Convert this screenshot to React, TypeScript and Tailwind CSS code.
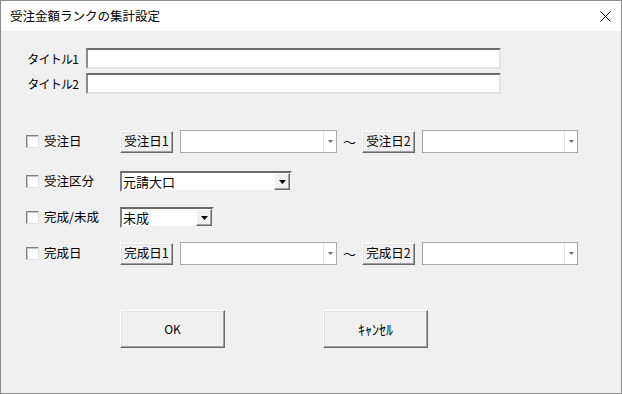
import React from 'react';

const font = { fontFamily: '"Noto Sans CJK JP", "Noto Sans", sans-serif' };

const CheckBox: React.FC = () => (
  <span className="block shrink-0 w-[13px] h-[13px] bg-white border border-t-[#808080] border-l-[#808080] border-b-[#e3e3e3] border-r-[#e3e3e3] shadow-[inset_1px_1px_0_#c8c8c8]" />
);

const RaisedButton: React.FC<{ label: string; w: string }> = ({ label, w }) => (
  <button
    className={`${w} h-[22px] shrink-0 bg-[#f0f0f0] text-[12.5px] leading-none text-black border border-t-white border-l-white border-b-[#696969] border-r-[#696969] shadow-[inset_-1px_-1px_0_#a0a0a0,inset_1px_1px_0_#e3e3e3]`}
  >
    {label}
  </button>
);

const DateCombo: React.FC<{ w: string }> = ({ w }) => (
  <div className={`${w} h-[23px] shrink-0 flex bg-white border border-[#a9a9a9]`}>
    <div className="flex-1" />
    <div className="w-[13px] border-l border-[#e3e3e3] flex items-center justify-center">
      <svg width="5" height="3" viewBox="0 0 5 3">
        <path d="M0 0h5L2.5 3z" fill="#6d6d6d" />
      </svg>
    </div>
  </div>
);

const OldSelect: React.FC<{ value: string; w: string }> = ({ value, w }) => (
  <div className={`${w} h-[21px] shrink-0 flex bg-white border-2 border-t-[#696969] border-l-[#808080] border-b-[#f0f0f0] border-r-[#f0f0f0]`}>
    <div className="flex-1 pl-[1px] text-[13px] leading-[17px] text-black">{value}</div>
    <div className="w-[16px] h-[17px] bg-[#f0f0f0] border border-t-white border-l-white border-b-[#696969] border-r-[#696969] shadow-[inset_-1px_-1px_0_#a0a0a0] flex items-center justify-center">
      <svg width="7" height="4" viewBox="0 0 7 4">
        <path d="M0 0h7L3.5 4z" fill="#000" />
      </svg>
    </div>
  </div>
);

const SunkenInput: React.FC = () => (
  <div className="w-[415px] h-[21px] bg-white border-2 border-t-[#6d6d6d] border-l-[#8a8a8a] border-b-[#e3e3e3] border-r-[#e3e3e3]" />
);

const CheckLabel: React.FC<{ label: string }> = ({ label }) => (
  <div className="w-[119px] shrink-0 flex items-center gap-[5px] pl-[25px]">
    <CheckBox />
    <span className="text-[12.5px] text-black whitespace-nowrap">{label}</span>
  </div>
);

const Tilde: React.FC = () => (
  <span className="w-[25px] shrink-0 text-center text-[13px] text-black">～</span>
);

const bigButton =
  'w-[105px] h-[38px] bg-[#f0f0f0] text-black border border-t-white border-l-white border-b-[#696969] border-r-[#696969] shadow-[inset_-1px_-1px_0_#a0a0a0,inset_1px_1px_0_#e3e3e3]';

export default function App() {
  return (
    <div style={font} className="w-[622px] h-[394px] flex flex-col border border-[#8c8c8c] bg-[#f0f0f0]">
      <div className="h-[30px] shrink-0 bg-white flex items-center justify-between pl-[9px] pr-[10px]">
        <span className="text-[12.5px] text-black">受注金額ランクの集計設定</span>
        <svg width="11" height="11" viewBox="0 0 11 11">
          <path d="M0.5 0.5l10 10M10.5 0.5l-10 10" stroke="#000" strokeWidth="1" />
        </svg>
      </div>

      <div className="flex-1 flex flex-col pt-[17px]">
        <div className="flex flex-col gap-[4px]">
          {['タイトル1', 'タイトル2'].map((t) => (
            <div key={t} className="flex items-center">
              <span className="w-[77px] text-right text-[12px] tracking-[-0.8px] text-black">{t}</span>
              <div className="w-[8px]" />
              <SunkenInput />
            </div>
          ))}
        </div>

        <div className="mt-[36px] flex items-center h-[23px]">
          <CheckLabel label="受注日" />
          <RaisedButton label="受注日1" w="w-[53px]" />
          <div className="w-[7px]" />
          <DateCombo w="w-[157px]" />
          <Tilde />
          <RaisedButton label="受注日2" w="w-[53px]" />
          <div className="w-[7px]" />
          <DateCombo w="w-[156px]" />
        </div>

        <div className="mt-[18px] flex items-center h-[21px]">
          <CheckLabel label="受注区分" />
          <OldSelect value="元請大口" w="w-[172px]" />
        </div>

        <div className="mt-[15px] flex items-center h-[21px]">
          <CheckLabel label="完成/未成" />
          <OldSelect value="未成" w="w-[94px]" />
        </div>

        <div className="mt-[14px] flex items-center h-[23px]">
          <CheckLabel label="完成日" />
          <RaisedButton label="完成日1" w="w-[53px]" />
          <div className="w-[7px]" />
          <DateCombo w="w-[157px]" />
          <Tilde />
          <RaisedButton label="完成日2" w="w-[53px]" />
          <div className="w-[7px]" />
          <DateCombo w="w-[156px]" />
        </div>

        <div className="mt-[45px] flex pl-[119px] gap-[98px]">
          <button className={`${bigButton} text-[12px]`}>OK</button>
          <button className={`${bigButton} text-[14px]`}>ｷｬﾝｾﾙ</button>
        </div>
      </div>
    </div>
  );
}
